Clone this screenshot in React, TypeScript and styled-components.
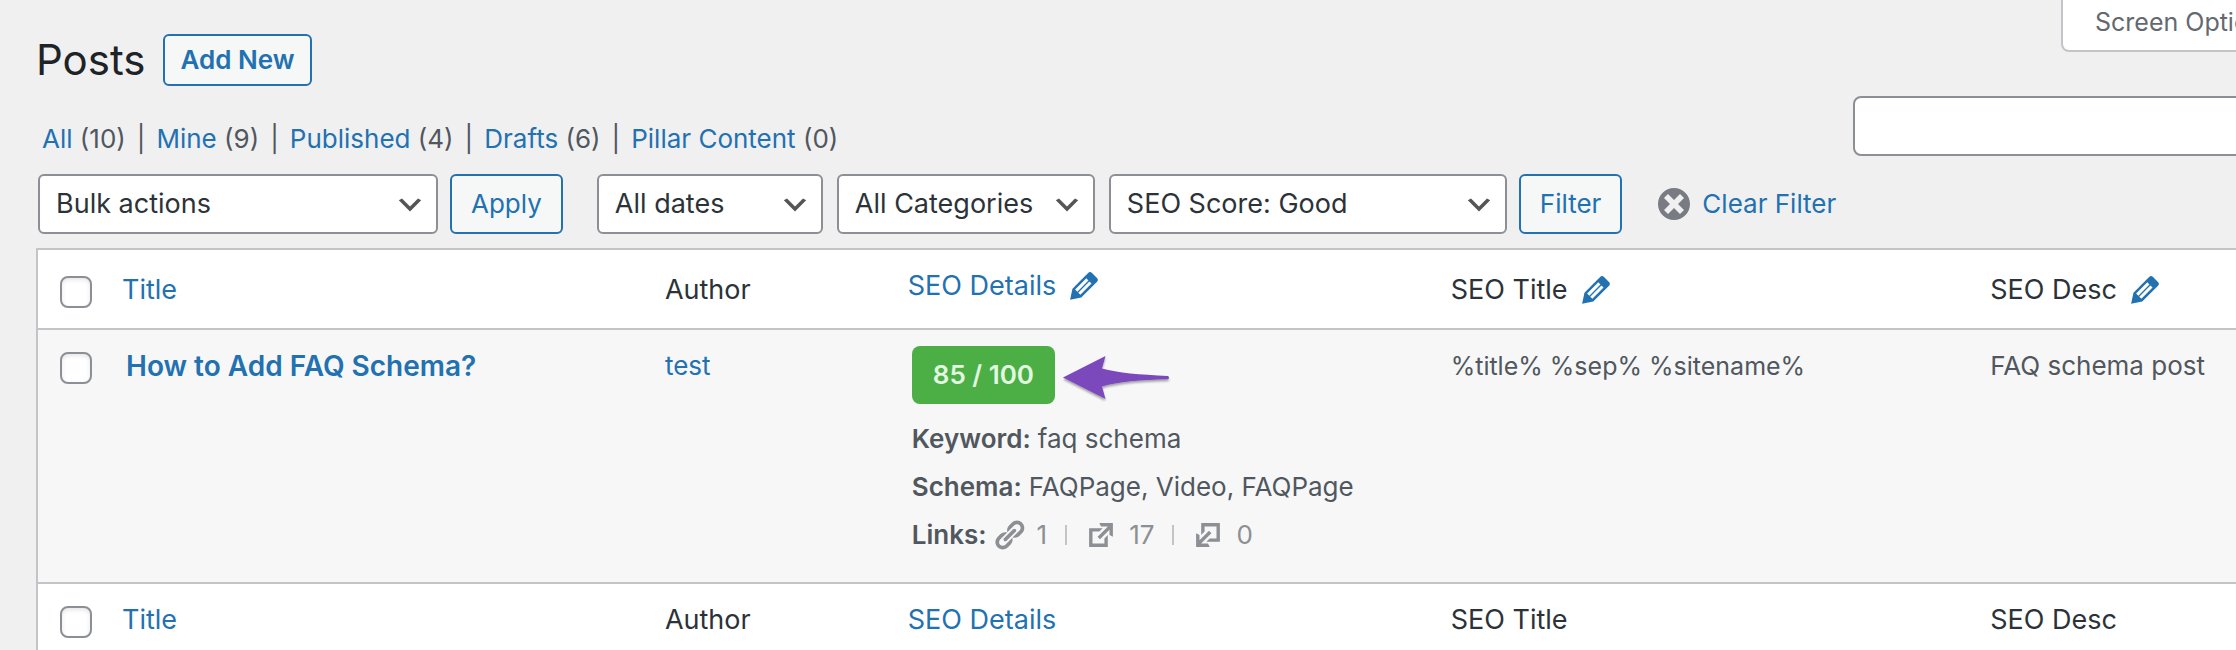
import React from "react";
import styled, { createGlobalStyle } from "styled-components";

const GlobalStyle = createGlobalStyle`
  *, *::before, *::after { box-sizing: border-box; }
  body {
    margin: 0;
    background: #f0f0f1;
    color: #50575e;
    font: 400 26px/32px Inter, "Liberation Sans", sans-serif;
  }
  #root { overflow: hidden; }
`;

const blue = "#2271b1";
const line = "#c3c4c7";

const Page = styled.main`
  padding-left: 36px;
`;

const Header = styled.header`
  display: flex;
  justify-content: space-between;
`;

const Heading = styled.div`
  display: flex;
  flex-direction: column;
  gap: 36px;
  padding-top: 34px;
`;

const TitleRow = styled.div`
  display: flex;
  align-items: center;
  gap: 18px;
`;

const PageTitle = styled.h1`
  margin: 0;
  color: #1d2327;
  font-size: 42px;
  line-height: 52px;
  font-weight: 400;
`;

const Button = styled.button<{ $title?: boolean }>`
  height: ${(p) => (p.$title ? 52 : 60)}px;
  padding: 0 ${(p) => (p.$title ? 15 : 19)}px;
  border: 2px solid ${blue};
  border-radius: 6px;
  background: #f6f7f7;
  color: ${blue};
  font: inherit;
  font-weight: ${(p) => (p.$title ? 600 : 400)};
  white-space: nowrap;
`;

const Views = styled.ul`
  display: flex;
  margin: 0;
  padding: 0 0 0 6px;
  list-style: none;
  line-height: 34px;
  white-space: nowrap;

  li + li::before {
    content: "|";
    padding: 0 11px;
  }
`;

const Link = styled.a<{ $bold?: boolean }>`
  color: ${blue};
  font-weight: ${(p) => (p.$bold ? 600 : 400)};
  text-decoration: none;
`;

const Tools = styled.div`
  display: flex;
  flex-direction: column;
  align-items: flex-end;
  gap: 44px;
  margin-right: -80px;
  padding-bottom: 18px;
`;

const ScreenTab = styled.button`
  height: 52px;
  width: 255px;
  padding: 0 0 6px 32px;
  border: 2px solid ${line};
  border-top: 0;
  border-radius: 0 0 8px 8px;
  background: #fff;
  color: #646970;
  font: inherit;
  font-size: 25px;
  text-align: left;
  white-space: nowrap;
`;

const SearchBox = styled.input`
  height: 60px;
  width: 463px;
  padding: 0 16px;
  border: 2px solid #8c8f94;
  border-radius: 8px;
  background: #fff;
  font: inherit;
`;

const Toolbar = styled.div`
  display: flex;
  align-items: center;
  gap: 12px;
  padding: 0 0 14px 2px;
`;

const Group = styled.div<{ $gap: number; $push?: boolean }>`
  display: flex;
  align-items: center;
  gap: ${(p) => p.$gap}px;
  margin-left: ${(p) => (p.$push ? 22 : 0)}px;
`;

const SelectWrap = styled.div`
  position: relative;

  svg {
    position: absolute;
    right: 12px;
    top: 15px;
    pointer-events: none;
  }
`;

const Select = styled.select<{ $width: number }>`
  display: block;
  appearance: none;
  width: ${(p) => p.$width}px;
  height: 60px;
  padding: 0 40px 0 16px;
  border: 2px solid #8c8f94;
  border-radius: 6px;
  background: #fff;
  color: #2c3338;
  font: inherit;
  font-size: 27px;
`;

const ClearLink = styled.a`
  display: flex;
  align-items: center;
  gap: 8px;
  margin-left: 20px;
  color: ${blue};
  text-decoration: none;
  white-space: nowrap;
`;

const Table = styled.table`
  width: 100%;
  table-layout: fixed;
  border-collapse: separate;
  border-spacing: 0;
  border: 2px solid ${line};
  border-right: 0;
  background: #fff;
`;

const HeadCell = styled.th<{ $top: number; $check?: boolean }>`
  height: 78px;
  padding: ${(p) => p.$top}px ${(p) => (p.$check ? 0 : 16)}px 0 ${(p) => (p.$check ? 22 : 16)}px;
  color: #2c3338;
  font-size: 27px;
  font-weight: 400;
  text-align: left;
  vertical-align: top;
  white-space: nowrap;

  thead & { height: 80px; border-bottom: 2px solid ${line}; }
  tfoot & { border-top: 2px solid ${line}; }
`;

const Cell = styled.td<{ $top?: number; $check?: boolean; $template?: boolean }>`
  height: 252px;
  padding: ${(p) => p.$top ?? 20}px ${(p) => (p.$check ? 0 : 16)}px 0 ${(p) => (p.$check ? 22 : 16)}px;
  background: #f7f7f7;
  font-size: ${(p) => (p.$template ? 25 : 26)}px;
  vertical-align: top;
  white-space: nowrap;
`;

const Column = styled.col<{ $width?: string }>`
  width: ${(p) => p.$width ?? "auto"};
`;

const Check = styled.input`
  display: block;
  appearance: none;
  width: 32px;
  height: 32px;
  margin: 0;
  border: 2px solid #8c8f94;
  border-radius: 8px;
  background: #fff;
  box-shadow: inset 0 2px 4px rgba(0, 0, 0, 0.1);
`;

const HeadLabel = styled.span`
  display: flex;
  align-items: center;
  gap: 8px;
  height: 32px;
  svg { color: ${blue}; }
`;

const PostTitle = styled.strong`
  padding-left: 4px;
  font-size: 28px;
`;

const Details = styled.div`
  display: flex;
  flex-direction: column;
  gap: 16px;
  padding-left: 4px;
`;

const ScoreRow = styled.div`
  display: flex;
  align-items: center;
  gap: 8px;
  padding-bottom: 3px;
`;

const Score = styled.span`
  padding: 13px 21px;
  border-radius: 8px;
  background: #4caf45;
  color: #e2f8e0;
  font-weight: 600;
`;

const Fact = styled.div`
  display: flex;
  gap: 7px;
  strong { font-weight: 600; }
`;

const Counts = styled.span`
  display: flex;
  align-items: center;
  height: 32px;
  margin-left: -2px;
  color: #8c8f94;
`;

const Count = styled.span`
  display: flex;
  align-items: center;
  gap: 11px;
  & + & {
    margin-left: 18px;
  }
  & + &::before {
    content: "";
    width: 2px;
    height: 20px;
    background: ${line};
    margin-right: 6px;
  }
`;

const paths = {
  chevron: "M5 6l5 5 5-5 2 1-7 7-7-7 2-1z",
  edit: "M13.89 3.39l2.71 2.72c.46.46.42 1.24.03 1.64l-8.01 8.02-5.56 1.16 1.16-5.58s7.6-7.63 7.99-8.03c.39-.39 1.22-.39 1.68.07zm-2.73 2.79l-5.59 5.61 1.11 1.11 5.54-5.65zm-2.97 8.23l5.58-5.6-1.07-1.08-5.59 5.6z",
  dismiss: "M10 2c4.42 0 8 3.58 8 8s-3.58 8-8 8-8-3.58-8-8 3.58-8 8-8zm5 11l-3-3 3-3-2-2-3 3-3-3-2 2 3 3-3 3 2 2 3-3 3 3 2-2z",
  link: "M17.74 2.76c1.68 1.69 1.68 4.41 0 6.1l-1.53 1.52c-1.12 1.12-2.7 1.47-4.14 1.09l2.62-2.61.76-.77.76-.76c.84-.84.84-2.2 0-3.04-.84-.85-2.2-.85-3.04 0l-.77.76-3.38 3.38c-.37-1.44-.02-3.02 1.1-4.14l1.52-1.53c1.69-1.68 4.42-1.68 6.1 0zM8.59 13.43l5.34-5.34c.42-.42.42-1.1 0-1.52-.44-.43-1.13-.39-1.53 0l-5.33 5.34c-.42.42-.42 1.1 0 1.52.44.43 1.13.39 1.52 0zm-.76 2.29l4.14-4.15c.38 1.44.03 3.02-1.09 4.14l-1.52 1.53c-1.69 1.68-4.41 1.68-6.1 0-1.68-1.68-1.68-4.42 0-6.1l1.53-1.52c1.12-1.12 2.7-1.47 4.14-1.1l-4.14 4.15c-.85.84-.85 2.2 0 3.05.84.84 2.2.84 3.04 0z",
  external: "M9 3h8v8l-2-1V6.92l-5.6 5.59-1.41-1.41L14.08 5H10zm3 12v-3l2-2v7H3V6h8L9 8H5v7h7z",
};

function Icon({ name, size, color = "currentColor", flip }: { name: keyof typeof paths; size: number; color?: string; flip?: boolean }) {
  return (
    <svg width={size} height={size} viewBox="0 0 20 20" fill={color} aria-hidden="true">
      <path d={paths[name]} transform={flip ? "rotate(180 10 10)" : undefined} />
    </svg>
  );
}

function Arrow() {
  return (
    <svg width="110" height="54" viewBox="0 0 110 54" aria-hidden="true">
      <defs>
        <filter id="arrow-shadow" x="-10%" y="-10%" width="120%" height="130%">
          <feDropShadow dx="0" dy="2" stdDeviation="1" floodColor="#000" floodOpacity="0.35" />
        </filter>
      </defs>
      <path
        filter="url(#arrow-shadow)"
        fill="#7b48bd"
        d="M0 29.500L42.500 8L39 20.500C55 25 76 26.500 105 28Q107 29.700 105 31.200C78 32 55 33.500 39 38.500L42.500 51Z"
      />
    </svg>
  );
}

function Dropdown({ label, width, options }: { label: string; width: number; options: string[] }) {
  return (
    <SelectWrap>
      <Select $width={width} aria-label={label}>
        {options.map((o) => <option key={o}>{o}</option>)}
      </Select>
      <Icon name="chevron" size={32} color="#555" />
    </SelectWrap>
  );
}

const views: [string, number][] = [["All", 10], ["Mine", 9], ["Published", 4], ["Drafts", 6], ["Pillar Content", 0]];

function HeadCells({ editable }: { editable?: boolean }) {
  const pencil = editable && <Icon name="edit" size={40} />;
  const top = editable ? 24 : 20;
  return (
    <tr>
      <HeadCell $top={top + 2} $check><Check type="checkbox" aria-label="Select all" /></HeadCell>
      <HeadCell $top={top}><Link href="#title">Title</Link></HeadCell>
      <HeadCell $top={top}>Author</HeadCell>
      <HeadCell $top={20}><HeadLabel><Link href="#seo">SEO Details</Link>{pencil}</HeadLabel></HeadCell>
      <HeadCell $top={top}><HeadLabel>SEO Title{pencil}</HeadLabel></HeadCell>
      <HeadCell $top={top}><HeadLabel>SEO Desc{pencil}</HeadLabel></HeadCell>
    </tr>
  );
}

export default function App() {
  return (
    <Page>
      <GlobalStyle />
      <Header>
        <Heading>
          <TitleRow>
            <PageTitle>Posts</PageTitle>
            <Button $title>Add New</Button>
          </TitleRow>
          <Views>
            {views.map(([name, count]) => (
              <li key={name}><Link href={"#" + name}>{name}</Link> ({count})</li>
            ))}
          </Views>
        </Heading>
        <Tools>
          <ScreenTab>Screen Options</ScreenTab>
          <SearchBox type="search" aria-label="Search posts" />
        </Tools>
      </Header>
      <Toolbar>
        <Group $gap={12}>
          <Dropdown label="Bulk actions" width={400} options={["Bulk actions", "Edit"]} />
          <Button>Apply</Button>
        </Group>
        <Group $gap={14} $push>
          <Dropdown label="Dates" width={226} options={["All dates"]} />
          <Dropdown label="Categories" width={258} options={["All Categories"]} />
          <Dropdown label="SEO score" width={398} options={["SEO Score: Good"]} />
        </Group>
        <Button>Filter</Button>
        <ClearLink href="#clear"><Icon name="dismiss" size={40} color="#787c82" />Clear Filter</ClearLink>
      </Toolbar>
      <Table>
        <colgroup>
          <Column $width="68px" />
          <Column $width="24.7%" />
          <Column $width="11.05%" />
          <Column $width="24.7%" />
          <Column $width="24.55%" />
          <Column />
        </colgroup>
        <thead><HeadCells editable /></thead>
        <tbody>
          <tr>
            <Cell $top={22} $check><Check type="checkbox" aria-label="Select How to Add FAQ Schema?" /></Cell>
            <Cell><PostTitle><Link $bold href="#post">How to Add FAQ Schema?</Link></PostTitle></Cell>
            <Cell><Link href="#author">test</Link></Cell>
            <Cell $top={16}>
              <Details>
                <ScoreRow><Score>85 / 100</Score><Arrow /></ScoreRow>
                <Fact><strong>Keyword:</strong><span>faq schema</span></Fact>
                <Fact><strong>Schema:</strong><span>FAQPage, Video, FAQPage</span></Fact>
                <Fact>
                  <strong>Links:</strong>
                  <Counts>
                    <Count><Icon name="link" size={34} />1</Count>
                    <Count><Icon name="external" size={34} />17</Count>
                    <Count><Icon name="external" size={34} flip />0</Count>
                  </Counts>
                </Fact>
              </Details>
            </Cell>
            <Cell $template>%title% %sep% %sitename%</Cell>
            <Cell>FAQ schema post</Cell>
          </tr>
        </tbody>
        <tfoot><HeadCells /></tfoot>
      </Table>
    </Page>
  );
}
